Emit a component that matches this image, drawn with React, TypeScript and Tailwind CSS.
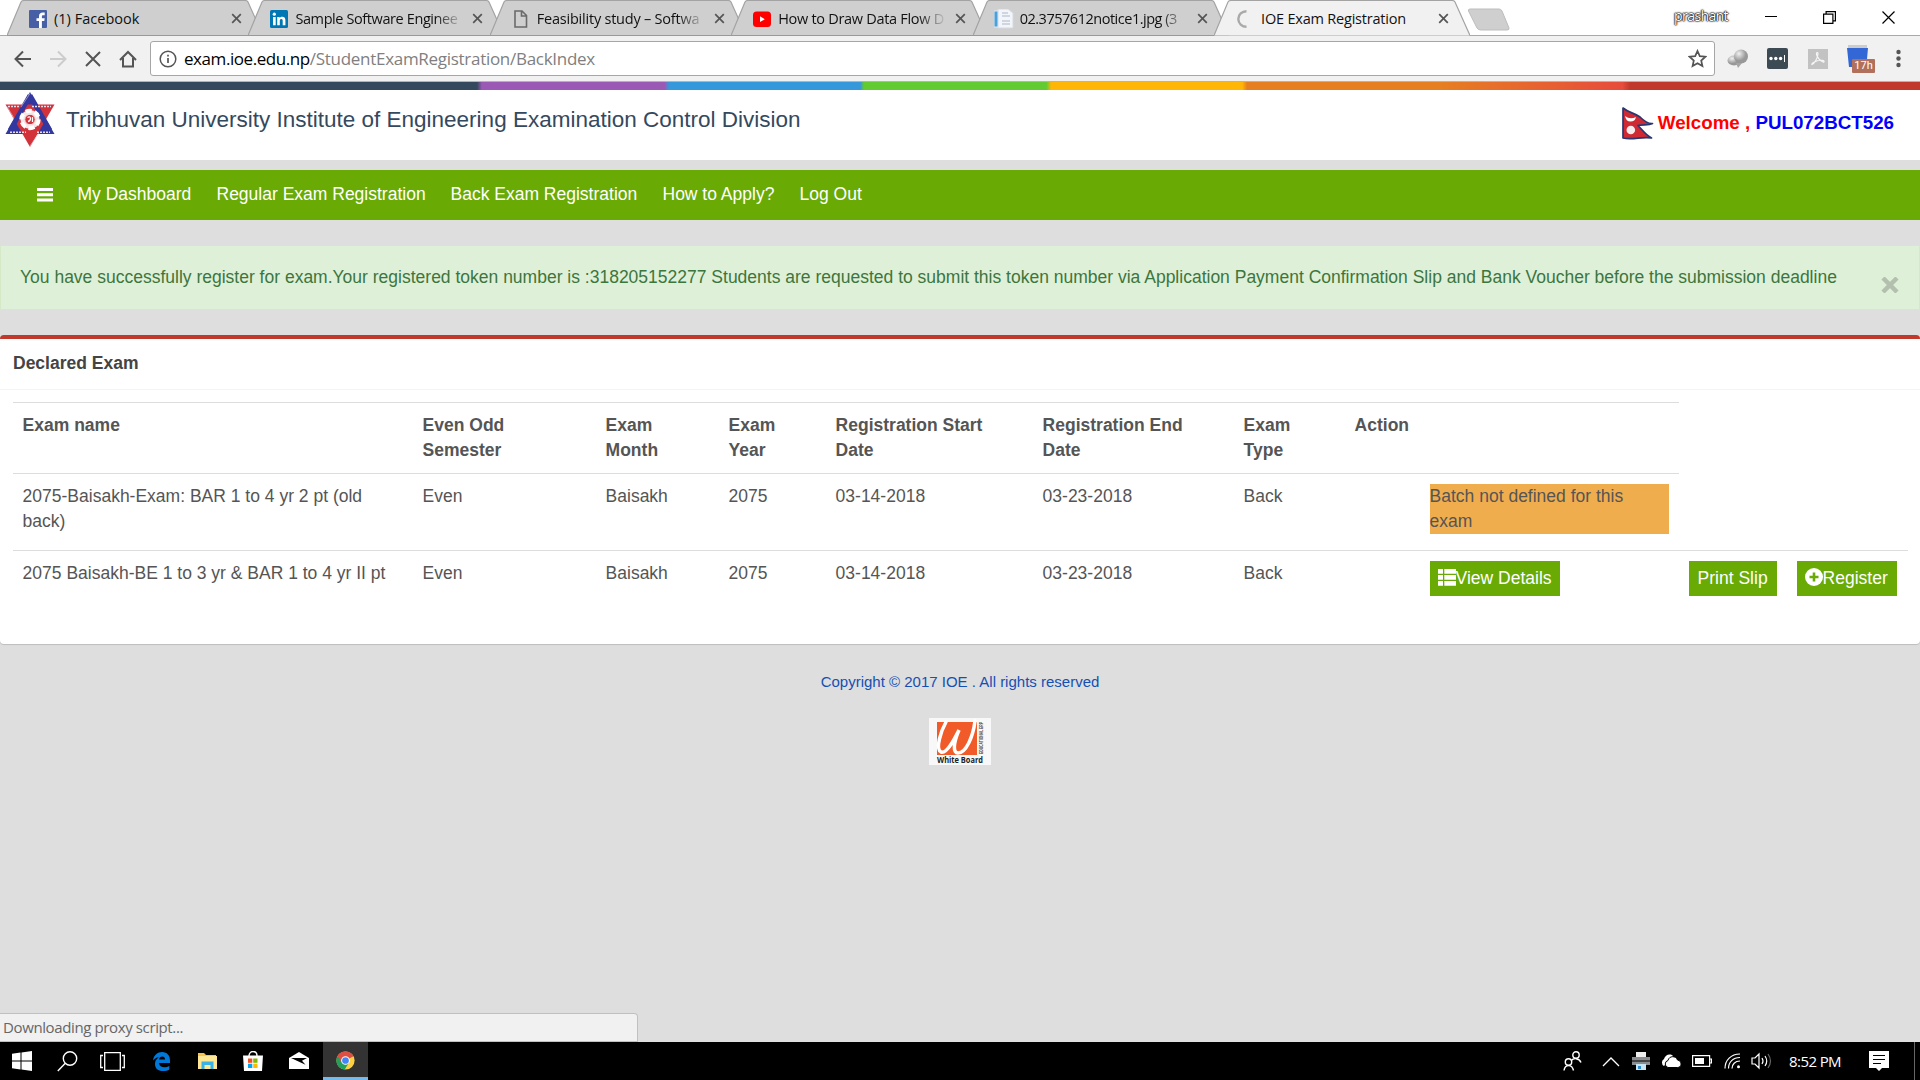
import React from "react";

const ui = "font-['Open_Sans','Noto_Sans',sans-serif]";

type Tab = { title: string; icon: React.ReactNode; fade?: boolean; spacing: string };

function FacebookIcon() {
  return (
    <svg width="18" height="18" viewBox="0 0 18 18">
      <rect width="18" height="18" rx="1" fill="#4760a5" />
      <path d="M10 18v-7H7.500V8.200H10v-2C10 3.700 11.500 2.500 13.700 2.500c1 0 1.800.1 2 .1v2.600h-1.400c-1.100 0-1.400.5-1.400 1.300v1.700h2.800l-.4 2.800h-2.400v7z" fill="#fff" />
    </svg>
  );
}

function LinkedInIcon() {
  return (
    <svg width="18" height="18" viewBox="0 0 18 18">
      <rect width="18" height="18" rx="1.500" fill="#0077b5" />
      <circle cx="4.300" cy="4.200" r="1.600" fill="#fff" />
      <path d="M3 7h2.700v8.300H3zM7.200 7h2.500v1.200c.5-.9 1.400-1.400 2.600-1.400 2.400 0 3.100 1.500 3.100 3.800v4.700h-2.700v-4.300c0-1.200-.2-2-1.400-2s-1.500.9-1.500 2v4.300H7.200z" fill="#fff" />
    </svg>
  );
}

function FileIcon() {
  return (
    <svg width="18" height="18" viewBox="0 0 18 18" fill="none" stroke="#6a6a6a" strokeWidth="1.600">
      <path d="M3 1h7l4.500 4.500V17H3zM9.500 1v5h5" />
    </svg>
  );
}

function YoutubeIcon() {
  return (
    <svg width="18" height="18" viewBox="0 0 18 18">
      <rect y="1.500" width="18" height="15.500" rx="3.500" fill="#f00" />
      <path d="M7 6.300v5.800l4.800-2.900z" fill="#fff" />
    </svg>
  );
}

function NoticeIcon() {
  return (
    <svg width="20" height="20" viewBox="0 0 20 20">
      <path d="M4 0h10l5 4v15H4z" fill="#f2f5fa" stroke="#d5dae2" />
      <rect x="0" y="2" width="4" height="16" fill="#4ba0d8" stroke="#dceaf5" />
      <path d="M8 4h6M8 7h8M8 12h8M8 15h8" stroke="#c3cbd8" strokeWidth="1.500" />
    </svg>
  );
}

function Spinner() {
  return (
    <svg width="18" height="18" viewBox="0 0 18 18" fill="none" stroke="#a9a9a9" strokeWidth="2.400">
      <path d="M10.500 1.200c-4.500 0-8.200 3.500-8.200 7.800s3.700 7.800 8.200 7.800" />
    </svg>
  );
}

const tabs: Tab[] = [
  { title: "(1) Facebook", icon: <FacebookIcon />, spacing: "tracking-[0.02px]" },
  { title: "Sample Software Enginee", icon: <LinkedInIcon />, fade: true, spacing: "tracking-[-0.4px]" },
  { title: "Feasibility study – Softwa", icon: <FileIcon />, fade: true, spacing: "tracking-[-0.22px]" },
  { title: "How to Draw Data Flow D", icon: <YoutubeIcon />, fade: true, spacing: "tracking-[-0.3px]" },
  { title: "02.3757612notice1.jpg (3", icon: <NoticeIcon />, fade: true, spacing: "tracking-[-0.48px]" },
  { title: "IOE Exam Registration", icon: <Spinner />, spacing: "tracking-[-0.2px]" },
];

function TabItem({ tab, active }: { tab: Tab; active: boolean }) {
  return (
    <div className="relative -mr-[14.6px] h-9 w-[256px] shrink-0">
      <svg className="absolute inset-0" width="256" height="36" viewBox="0 0 256 36">
        <path d="M0 35.500L14 2Q15 .5 17 .5H238Q240 .5 241 2L256 35.500z" fill={active ? "#f1f1f1" : "#cfcfcf"} />
        <path d="M0 35.500L14 2Q15 .5 17 .5H238Q240 .5 241 2L256 35.500" fill="none" stroke="#a3a3a3" strokeWidth="1.200" />
        {!active && <path d="M0 35.500H256" stroke="#999" />}
      </svg>
      <div className="relative flex h-[37px] items-center pl-[21px]">
        <span className="flex w-[20px] shrink-0 justify-center">{tab.icon}</span>
        <span className={"ml-[6px] w-[167px] whitespace-nowrap text-[14.500px] text-[#111] " + tab.spacing + (tab.fade ? " [mask-image:linear-gradient(to_right,#000_84%,transparent_101%)]" : "")}>
          {tab.title}
        </span>
        <svg className="ml-[10px]" width="11" height="11" viewBox="0 0 11 11" stroke="#555" strokeWidth="1.700">
          <path d="M1.200 1.200l8.600 8.600M9.800 1.200L1.200 9.800" />
        </svg>
      </div>
    </div>
  );
}

function TabStrip() {
  return (
    <div className={"relative flex h-[36px] bg-white pl-[7px] " + ui}>
      <div className="absolute bottom-0 left-0 h-px w-full bg-[#a9a9a9]" />
      {tabs.map((t, i) => (
        <TabItem key={t.title} tab={t} active={i === 5} />
      ))}
      <svg className="relative ml-[12px] mt-[8px]" width="46" height="24" viewBox="0 0 46 24">
        <path d="M3 1H32Q34 1 35 3L42 20Q42.500 22 40 22H14Q11 22 10 20L1.500 3Q1 1 3 1z" fill="#cfcfcf" stroke="#bdbdbd" />
      </svg>
      <span className="ml-auto mr-[37px] mt-[6px] text-[14px] leading-[20px] tracking-[-0.6px] text-white [text-shadow:0_0_1px_#000,0_0_1px_#000,0_0_2px_#000,0_0_2px_#444]">prashant</span>
      <svg className="mr-[46px] mt-[11px]" width="12" height="12" viewBox="0 0 12 12" stroke="#000"><path d="M0 5.500h12" /></svg>
      <svg className="mr-[46px] mt-[11px]" width="13" height="13" viewBox="0 0 13 13" fill="none" stroke="#000" strokeWidth="1.200"><path d="M.6 3.100h9.300v9.300H.6zM3.100 3V.6h9.300v9.300H10" /></svg>
      <svg className="mr-[25px] mt-[11px]" width="13" height="13" viewBox="0 0 13 13" stroke="#000" strokeWidth="1.200"><path d="M.5.5l12 12M12.500.5l-12 12" /></svg>
    </div>
  );
}

function Toolbar() {
  return (
    <div className={"flex h-[46px] items-center border-b border-[#b4b4b4] bg-[#f1f1f1] " + ui}>
      <svg className="ml-[14px]" width="18" height="18" viewBox="0 0 18 18" fill="none" stroke="#555" strokeWidth="2"><path d="M17 9H2M9 1.500L1.500 9 9 16.500" /></svg>
      <svg className="ml-[17px]" width="18" height="18" viewBox="0 0 18 18" fill="none" stroke="#ccc" strokeWidth="2"><path d="M1 9h15M9 1.500L16.500 9 9 16.500" /></svg>
      <svg className="ml-[18px]" width="16" height="16" viewBox="0 0 16 16" fill="none" stroke="#555" strokeWidth="2"><path d="M1 1l14 14M15 1L1 15" /></svg>
      <svg className="ml-[18px]" width="18" height="18" viewBox="0 0 18 18" fill="none" stroke="#555" strokeWidth="2"><path d="M1 10L9 2l8 8M4 8v8.500h10V8" /></svg>
      <div className="ml-[13px] flex h-[35px] w-[1565px] items-center rounded-[3px] border border-[#a6a6a6] bg-white">
        <svg className="ml-[8px]" width="18" height="18" viewBox="0 0 18 18" fill="none" stroke="#555" strokeWidth="1.500"><circle cx="9" cy="9" r="7.800" /><path d="M9 8v5M9 4.700v1.800" strokeWidth="1.700" /></svg>
        <span className="ml-[7px] whitespace-nowrap text-[17px] tracking-[-0.43px] text-black">exam.ioe.edu.np<span className="tracking-[-0.29px] text-[#808080]">/StudentExamRegistration/BackIndex</span></span>
        <svg className="ml-auto mr-[7px]" width="19" height="19" viewBox="0 0 24 24" fill="none" stroke="#555" strokeWidth="2.200"><path d="M12 2.500l2.900 6.600 7.100.7-5.300 4.800 1.500 7-6.200-3.700-6.200 3.700 1.500-7L2 9.800l7.100-.7z" /></svg>
      </div>
      <Extensions />
    </div>
  );
}

function Extensions() {
  return (
    <div className="flex items-center">
      <svg className="ml-[12px]" width="22" height="20" viewBox="0 0 22 20">
        <defs><radialGradient id="ball" cx=".35" cy=".3"><stop offset="0" stopColor="#f0f0f0" /><stop offset="1" stopColor="#989898" /></radialGradient></defs>
        <ellipse cx="7" cy="11.500" rx="6.500" ry="5" fill="url(#ball)" /><circle cx="14" cy="7.500" r="7" fill="url(#ball)" /><path d="M9 14l2 5 4-5z" fill="#a5a5a5" />
      </svg>
      <svg className="ml-[18px]" width="21" height="21" viewBox="0 0 21 21">
        <rect width="21" height="21" rx="2" fill="#3c4a54" /><circle cx="4" cy="10.500" r="1.700" fill="#fff" /><circle cx="8.800" cy="10.500" r="1.700" fill="#fff" /><circle cx="13.600" cy="10.500" r="1.700" fill="#fff" /><path d="M17.500 7v7" stroke="#fff" />
      </svg>
      <svg className="ml-[20px]" width="20" height="20" viewBox="0 0 20 20">
        <rect width="20" height="20" fill="#c2c2c2" /><path d="M4 15.500c2-.5 6-6.500 6-11 0-1.500-2-1-1.500.8.700 3 3.500 6.700 6.500 7.700 1.500.3 1.500-1.500-.5-1.700-3-.2-6.500.7-9 2.200-1.500 1-2 1.700-1.500 2z" fill="none" stroke="#f5f5f5" strokeWidth="1.200" />
      </svg>
      <div className="relative ml-[19px] h-[28px] w-[28px]">
        <svg className="absolute left-0 top-0" width="21" height="22" viewBox="0 0 21 22"><rect x="1" y="0" width="19" height="4" fill="#ccc" /><path d="M0 3h21l-1 11H8v8H2z" fill="#3367d6" /></svg>
        <span className="absolute left-[5px] top-[14px] flex h-[14px] w-[23px] items-center justify-center rounded-[1px] bg-[#b0705c] font-[Roboto,sans-serif] text-[11px] leading-[14px] text-white">17h</span>
      </div>
      <svg className="ml-[21px]" width="5" height="20" viewBox="0 0 5 20" fill="#555"><circle cx="2.500" cy="3" r="2.200" /><circle cx="2.500" cy="9.500" r="2.200" /><circle cx="2.500" cy="16" r="2.200" /></svg>
    </div>
  );
}

function Crest() {
  return (
    <svg width="50" height="55" viewBox="0 0 50 55">
      <path d="M25 0L49.500 42H.5z" fill="#3238a0" />
      <path d="M25 55L.5 12.500H49.500z" fill="#d2323a" />
      <path d="M25 3.500L45 38.500M25 3.500L5 38.500" fill="none" stroke="#3238a0" strokeWidth="5" />
      <path d="M25 1.500L16 15M34 41L25 54M2 14.500L9 26" fill="none" stroke="#e6c9d8" strokeWidth=".6" />
      <circle cx="25" cy="27.500" r="9.500" fill="#f6e4e6" />
      <circle cx="25" cy="27.500" r="8.700" fill="none" stroke="#fff" strokeWidth="4" strokeDasharray="6 3.100" />
      <circle cx="25" cy="27.500" r="5.200" fill="#d2323a" stroke="#f6e4e6" />
      <path d="M22.500 25.500q3-1.500 3 1t-2.500 3M27.500 25v5" fill="none" stroke="#fff" strokeWidth="1.300" />
      <path d="M3 14.500h11M27 14.500h19M5 40.300h16M32 40.300h13" stroke="#e9dcec" strokeWidth="1.600" strokeDasharray="2 1" />
    </svg>
  );
}

function Flag() {
  return (
    <svg width="32" height="33" viewBox="0 0 32 33">
      <path d="M1 1C7 6 13 6 18 10c4 4 8 7 12.500 6.500C26 19 21 17 16 18.500c4 4 7 9 13.500 12.500C20 29 11 33.500 1 31z" fill="#cf2a34" stroke="#2b356f" strokeWidth="1.700" strokeLinejoin="round" />
      <path d="M3 9q5 4 11 1-1 4.500-5.500 4.500T3 9z" fill="#fff" /><circle cx="8.800" cy="23" r="4.300" fill="#f6ecee" />
    </svg>
  );
}

function SiteHeader() {
  return (
    <>
      <div className="h-[8px] bg-[linear-gradient(to_right,#34495e_0_24.850%,#9b59b6_25.100%_34.600%,#3498db_34.850%_44.800%,#62cb31_45%_54.500%,#ffb606_54.750%_64.700%,#e67e22_64.950%_75%,#e74c3c_84.500%,#c0392b_84.900%_100%)]" />
      <header className="flex h-[70px] bg-white">
        <div className="ml-[5px] mt-[2px]"><Crest /></div>
        <h1 className="ml-[11px] mt-[15px] whitespace-nowrap text-[22.500px] leading-[30px] text-[#34495e]">Tribhuvan University Institute of Engineering Examination Control Division</h1>
        <div className="ml-auto mr-[26px] flex h-[34px] mt-[17px] whitespace-nowrap text-[18.750px] font-bold leading-[31px]">
          <Flag />
          <span className="ml-[4px] text-[#f00]">Welcome , <span className="text-[#00f]">PUL072BCT526</span></span>
        </div>
      </header>
    </>
  );
}

const navItems = [
  { label: "My Dashboard", width: "w-[139px]" },
  { label: "Regular Exam Registration", width: "w-[234px]" },
  { label: "Back Exam Registration", width: "w-[212px]" },
  { label: "How to Apply?", width: "w-[137px]" },
  { label: "Log Out", width: "w-[80px]" },
];

function NavBar() {
  return (
    <nav className="mt-[10px] flex h-[50px] items-center bg-[#6aaa05] text-white">
      <svg className="ml-[37px]" width="16" height="14" viewBox="0 0 16 14" fill="#fff"><path d="M0 0h16v3H0zM0 5.300h16v3H0zM0 10.600h16v3H0z" /></svg>
      <div className="ml-[24.500px] flex pb-[2px]">
        {navItems.map((n) => <a key={n.label} className={"whitespace-nowrap text-[17.500px] leading-[25px] " + n.width}>{n.label}</a>)}
      </div>
    </nav>
  );
}

const th = "p-[10px] text-left align-top font-bold border-t border-[#ddd]";
const td = "p-[10px] align-top border-t border-[#ddd]";
const btn = "flex h-[35px] items-center bg-[#6aaa05] px-[8px] whitespace-nowrap text-white";

function ExamTable() {
  return (
    <table className="w-[1895px] table-fixed border-collapse text-[17.500px] leading-[25px] text-[#555]">
      <colgroup>
        <col className="w-[400px]" /><col className="w-[183px]" /><col className="w-[123px]" /><col className="w-[107px]" /><col className="w-[207px]" /><col className="w-[201px]" /><col className="w-[111px]" /><col className="w-[75px]" /><col className="w-[259px]" /><col className="w-[108px]" /><col className="w-[121px]" />
      </colgroup>
      <tbody>
        <tr className="h-[71px]">
          <th className={th}>Exam name</th><th className={th}>Even Odd<br />Semester</th><th className={th}>Exam<br />Month</th><th className={th}>Exam<br />Year</th><th className={th}>Registration Start<br />Date</th><th className={th}>Registration End<br />Date</th><th className={th}>Exam<br />Type</th><th className={th}>Action</th><th className={th} /><th /><th />
        </tr>
        <tr className="h-[77px]">
          <td className={td}>2075-Baisakh-Exam: BAR 1 to 4 yr 2 pt (old<br />back)</td><td className={td}>Even</td><td className={td}>Baisakh</td><td className={td}>2075</td><td className={td}>03-14-2018</td><td className={td}>03-23-2018</td><td className={td}>Back</td><td className={td} />
          <td className={td}><div className="bg-[#f0ad4e]">Batch not defined for this<br />exam</div></td><td /><td />
        </tr>
        <tr>
          <td className={td + " whitespace-nowrap"}>2075 Baisakh-BE 1 to 3 yr &amp; BAR 1 to 4 yr II pt</td><td className={td}>Even</td><td className={td}>Baisakh</td><td className={td}>2075</td><td className={td}>03-14-2018</td><td className={td}>03-23-2018</td><td className={td}>Back</td><td className={td} />
          <td className={td}>
            <a className={btn + " w-[130px]"}>
              <svg className="mb-[3px] shrink-0" width="18" height="17" viewBox="0 0 18 17" fill="#fff"><path d="M0 0h5v4.700H0zM6.300 0H18v4.700H6.300zM0 6h5v4.700H0zM6.300 6H18v4.700H6.300zM0 12h5v4.700H0zM6.300 12H18v4.700H6.300z" /></svg>View Details
            </a>
          </td>
          <td className={td}><a className={btn + " w-[88px]"}><span className="ml-[1px]">Print Slip</span></a></td>
          <td className={td}>
            <a className={btn + " w-[100px]"}>
              <svg className="mb-[3px] shrink-0" width="18" height="18" viewBox="0 0 18 18"><circle cx="9" cy="9" r="9" fill="#fff" /><path d="M9 4.500v9M4.500 9h9" stroke="#6aaa05" strokeWidth="2.600" /></svg>Register
            </a>
          </td>
        </tr>
      </tbody>
    </table>
  );
}

function WhiteBoardLogo() {
  return (
    <svg width="62" height="47" viewBox="0 0 62 47">
      <rect width="62" height="47" fill="#f8f8f8" />
      <rect x="8" y="4" width="40" height="33" fill="#f15a29" />
      <path d="M17 4C12 13 6 31 12 34c6 2 14-14 18-22-6 14-6 23-1 23 8 0 15-16 17-32" fill="none" stroke="#fff" strokeWidth="3.500" strokeLinecap="round" />
      <text x="8" y="45" fontFamily="Open Sans, sans-serif" fontWeight="700" fontSize="8.500" textLength="46" lengthAdjust="spacingAndGlyphs" fill="#222">White Board</text>
      <text transform="translate(53.500 36) rotate(-90)" fontFamily="Liberation Sans, sans-serif" fontWeight="700" fontSize="4.500" textLength="32" lengthAdjust="spacingAndGlyphs" fill="#444">EDUCATIONAL ERP</text>
    </svg>
  );
}

function Taskbar() {
  return (
    <div className={"flex h-[38px] shrink-0 items-center bg-black text-white " + ui}>
      <svg className="ml-[12px]" width="20" height="20" viewBox="0 0 20 20" fill="#fff"><path d="M0 2.800L8.500 1.600v8H0zM9.500 1.400L20 0v9.600H9.500zM0 10.500h8.500v8L0 17.300zM9.500 10.500H20V20L9.500 18.600z" /></svg>
      <svg className="ml-[25px]" width="21" height="21" viewBox="0 0 21 21" fill="none" stroke="#fff" strokeWidth="1.400"><circle cx="13" cy="7.500" r="6.700" /><path d="M8.300 12.300L.8 20" /></svg>
      <svg className="ml-[22px]" width="25" height="19" viewBox="0 0 25 19" fill="none" stroke="#fff" strokeWidth="1.300"><path d="M4.700.7h15.600v17.600H4.700zM3 3.500H.7v12H3M22 3.500h2.300v12H22" /></svg>
      <svg className="ml-[28px]" width="18" height="19" viewBox="0 0 18 19"><path d="M0 8.500C.8 3 4.500 0 9.200 0 14 0 17 3.500 17 8.500V11H6c.2 3 2.400 4.200 5.300 4.200 2 0 3.500-.5 5-1.300v3.500C14.700 18.500 12.500 19 10 19c-5 0-8-2.600-8-7 0-3 1.500-5.500 4-6.700C3.500 5.500 1.500 6.500 0 8.500zM6 7.500h6C12 5.600 11 4.600 9.200 4.600 7.500 4.600 6.300 5.800 6 7.500z" fill="#0078d7" /></svg>
      <svg className="ml-[27px]" width="19" height="17" viewBox="0 0 19 17"><path d="M0 0h6l2 2h10v14H0z" fill="#f5c451" /><path d="M0 3h19v13H0z" fill="#ffe793" /><path d="M3.500 16V8.500h12V16h-3v-4h-6v4z" fill="#39b2e6" /></svg>
      <svg className="ml-[26px]" width="20" height="20" viewBox="0 0 20 20"><path d="M6 5c0-6 8-6 8 0" fill="none" stroke="#fff" strokeWidth="1.400" /><path d="M0 4.500h20L19 20H1z" fill="#fff" /><path d="M5 7.500h4.300v4.300H5z" fill="#f25022" /><path d="M10.200 7.500h4.300v4.300h-4.300z" fill="#7fba00" /><path d="M5 12.700h4.300V17H5z" fill="#00a4ef" /><path d="M10.200 12.700h4.300V17h-4.300z" fill="#ffb900" /></svg>
      <svg className="ml-[26px]" width="20" height="18" viewBox="0 0 20 18"><path d="M0 6L10 0l10 6v11H0z" fill="#fff" /><path d="M2 6h16l-5 2.800 3.500 4L2 6z" fill="#000" /></svg>
      <div className="ml-[14px] flex h-full w-[45px] items-center justify-center border-b-[3px] border-[#76b9ed] bg-[#333] pt-[2px]">
        <ChromeIcon />
      </div>
      <Tray />
    </div>
  );
}

function ChromeIcon() {
  return (
    <svg width="19" height="19" viewBox="0 0 48 48">
      <circle cx="24" cy="24" r="23" fill="#fdd042" />
      <path d="M24 24L4 12.500A23 23 0 0 1 44 13z" fill="#dd4f43" />
      <path d="M24 24L4 12.500A23 23 0 0 0 22 47L33 29z" fill="#1fa05d" />
      <path d="M24 13h20a23 23 0 0 0-40-.5L14 29z" fill="#dd4f43" />
      <circle cx="24" cy="24" r="11" fill="#fff" /><circle cx="24" cy="24" r="8.500" fill="#4285f4" />
    </svg>
  );
}

function Tray() {
  return (
    <div className="ml-auto flex h-full items-center">
      <svg width="19" height="20" viewBox="0 0 19 20" fill="none" stroke="#fff" strokeWidth="1.400"><circle cx="13" cy="4" r="3.200" /><circle cx="5.500" cy="11" r="3.200" /><path d="M8.500 9.500C10 7 16 6.500 18 11.500M1 19.500c1-6.500 8-6.500 9.500 0" /></svg>
      <svg className="ml-[20px]" width="18" height="11" viewBox="0 0 18 11" fill="none" stroke="#fff" strokeWidth="1.300"><path d="M1 10l8-8 8 8" /></svg>
      <svg className="ml-[11px]" width="20" height="20" viewBox="0 0 20 20"><path d="M5 1h10v6H5z" fill="#eee" /><path d="M1 6h18v8H1z" fill="#8a8d90" /><path d="M1 9h18v2H1z" fill="#444" /><path d="M5 13h10v6H5z" fill="#c8e5f5" /><path d="M7 15h3v3H7z" fill="#2d8bc9" /></svg>
      <svg className="ml-[9px]" width="22" height="14" viewBox="0 0 22 14"><path d="M4 12a4 4 0 0 1 0-7C5 1 10-1 13 2" fill="#fff" /><path d="M8 13.500a3.600 3.600 0 0 1 0-7c1-5 8-5 9.500-.5 5 1 4.500 7.500 0 7.500z" fill="#fff" stroke="#000" /></svg>
      <svg className="ml-[10px]" width="20" height="12" viewBox="0 0 20 12" fill="none" stroke="#fff" strokeWidth="1.200"><path d="M.6.6h17v10.800H.6zM17.600 4h1.800v4h-1.800" /><path d="M3 3h9v6H3z" fill="#fff" stroke="none" /></svg>
      <svg className="ml-[12px]" width="17" height="16" viewBox="0 0 17 16" fill="none" stroke="#fff" strokeWidth="1.200"><path d="M1 15.500C1 7 7 1 16 1M4.500 15.500C4.500 9 9 4.500 16 4.500M8 15.500c0-4 3-7.500 8-7.500" /><circle cx="14.500" cy="13.800" r="1.500" fill="#fff" stroke="none" /></svg>
      <svg className="ml-[10px]" width="21" height="18" viewBox="0 0 21 18" fill="none" stroke="#fff" strokeWidth="1.200"><path d="M1 6h3l4-4v14l-4-4H1zM11 6q2 3 0 6M14 4q3.500 5 0 10" /><path d="M17 2q5 7 0 14" stroke="#666" /></svg>
      <span className="ml-[17px] whitespace-nowrap text-[15px] tracking-[-0.6px]">8:52 PM</span>
      <svg className="ml-[28px]" width="20" height="20" viewBox="0 0 20 20"><path d="M0 0h20v17h-7l-3 3-3-3H0z" fill="#fff" /><path d="M4 4.500h12M4 8.500h12M4 12.500h8" stroke="#000" strokeWidth="1.200" /></svg>
      <div className="ml-[25px] h-full w-[6px] border-l border-[#666]" />
    </div>
  );
}

export default function App() {
  return (
    <div className="flex h-[1080px] w-[1920px] flex-col overflow-hidden bg-[#dedede] font-['Liberation_Sans',Arial,sans-serif]">
      <TabStrip />
      <Toolbar />
      <SiteHeader />
      <NavBar />
      <div className="mt-[25px] flex h-[65px] items-start border border-[#d6e9c6] bg-[#dff0d8] pl-[19px] pt-[19px] text-[17.500px] leading-[25px] text-[#3c763d]">
        <span className="whitespace-nowrap">You have successfully register for exam.Your registered token number is :318205152277 Students are requested to submit this token number via Application Payment Confirmation Slip and Bank Voucher before the submission deadline</span>
        <svg className="ml-auto mr-[20px] mt-[12px]" width="18" height="16" viewBox="0 0 18 16" stroke="#b2c0ad" strokeWidth="4.500"><path d="M2 1l14 14M16 1L2 15" /></svg>
      </div>
      <section className="mt-[25px] h-[309px] shrink-0 rounded-[4px] border-t-[4px] border-[#c0392b] bg-white shadow-[0_1px_1px_rgba(0,0,0,0.15)]">
        <h2 className="h-[51px] border-b border-[#f4f4f4] pl-[13px] pt-[12px] text-[17.500px] font-bold leading-[25px] text-[#444]">Declared Exam</h2>
        <div className="pl-[12.600px] pt-[12px]"><ExamTable /></div>
      </section>
      <footer className="mt-[27px] flex flex-col items-center text-[15px] leading-[22px] text-[#1450b4]">
        <span className="whitespace-pre">Copyright © 2017 IOE . All rights reserved</span>
        <div className="mt-[25px]"><WhiteBoardLogo /></div>
      </footer>
      <div className={"mt-auto h-[29px] w-[638px] rounded-tr-[4px] border border-l-0 border-[#c0c0c0] bg-[#f1f1f1] pl-[3px] text-[15px] leading-[27px] text-[#666] " + ui}>
        <span className="tracking-[-0.38px]">Downloading proxy script...</span>
      </div>
      <Taskbar />
    </div>
  );
}
